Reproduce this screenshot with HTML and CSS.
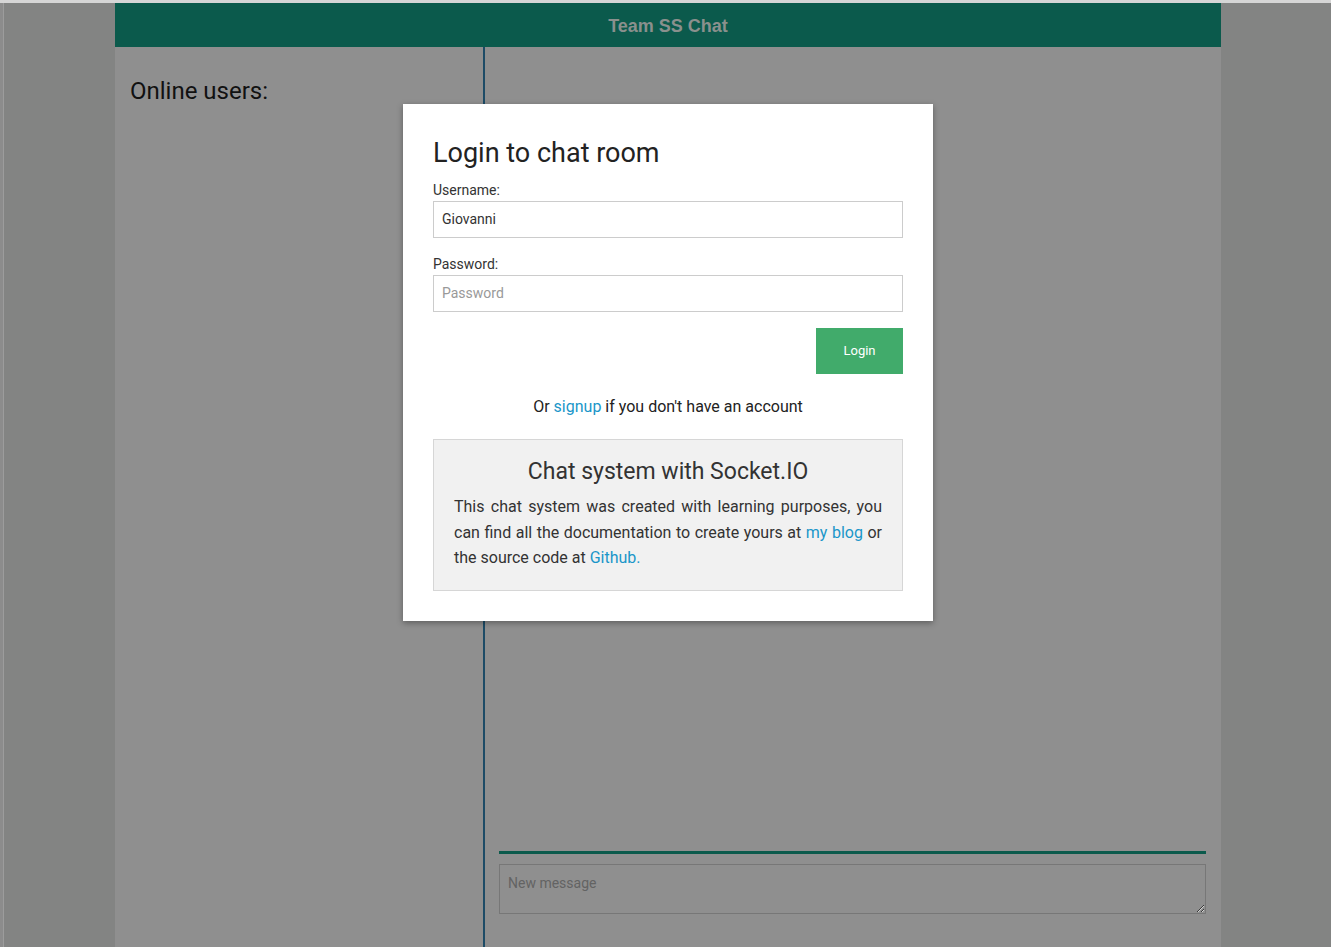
FILE: index.html
```html
<!DOCTYPE html>
<html>
<head>
<meta charset="utf-8">
<title>Team SS Chat</title>
<link rel="stylesheet" href="styles.css">
</head>
<body>
<div class="topline"></div>
<div class="page">
  <div class="edge"></div>
  <div class="app">
    <header class="header">Team SS Chat</header>
    <div class="main">
      <aside class="users">
        <h3 class="users-title">Online users:</h3>
      </aside>
      <section class="chat">
        <div class="messages"></div>
        <div class="divider"></div>
        <textarea class="new-msg" placeholder="New message"></textarea>
      </section>
    </div>
    <div class="overlay">
      <div class="modal">
        <h2 class="modal-title">Login to chat room</h2>
        <div class="field">
          <label class="label">Username:</label>
          <input class="input" type="text" value="Giovanni">
        </div>
        <div class="field">
          <label class="label">Password:</label>
          <input class="input" type="password" placeholder="Password">
        </div>
        <div class="actions">
          <button class="btn">Login</button>
        </div>
        <p class="signup">Or <a href="#">signup</a> if you don't have an account</p>
        <div class="info">
          <h3 class="info-title">Chat system with Socket.IO</h3>
          <p class="info-text">This chat system was created with learning purposes, you can find all the documentation to create yours at <a href="#">my blog</a> or the source code at <a href="#">Github.</a></p>
        </div>
      </div>
    </div>
  </div>
</div>
</body>
</html>
```
FILE: styles.css
```css
* { box-sizing: border-box; }
html, body { margin: 0; padding: 0; }
body {
  background: #838483;
  font-family: Roboto, "Liberation Sans", sans-serif;
  height: 947px;
  overflow: hidden;
}
.topline { height: 3px; background: #d6d6d6; }
.page { display: flex; height: 944px; }
.edge {
  width: 4px;
  background: #8c8c8c;
  border-right: 1px solid #9c9c9c;
}
.app {
  position: relative;
  width: 1106px;
  margin-left: 111px;
  background: #8f8f8f;
  display: flex;
  flex-direction: column;
}
.header {
  height: 44px;
  background: #0b5a4c;
  color: #8a908d;
  font-family: "Liberation Sans", Arial, sans-serif;
  font-weight: bold;
  font-size: 18px;
  line-height: 46px;
  text-align: center;
}
.main { flex: 1; display: flex; }
.users {
  width: 370px;
  border-right: 2px solid #1d4b66;
  padding: 15px;
}
.users-title {
  margin: 15px 0 0;
  font-weight: normal;
  font-size: 24px;
  line-height: 28px;
  color: #111;
}
.chat {
  flex: 1;
  display: flex;
  flex-direction: column;
  padding: 0 15px 33px 14px;
}
.messages { flex: 1; }
.divider { height: 3px; background: #0b5a4c; margin-bottom: 10px; }
.new-msg {
  height: 50px;
  background: transparent;
  border: 1px solid #777;
  font-family: Roboto, "Liberation Sans", sans-serif;
  font-size: 14px;
  padding: 10px 8px 8px;
  resize: vertical;
}
.new-msg::placeholder { color: #636363; }
.overlay {
  position: absolute;
  left: 0; top: 0; right: 0; bottom: 0;
  display: flex;
  justify-content: center;
  align-items: flex-start;
  padding-top: 101px;
}
.modal {
  width: 530px;
  background: #fff;
  padding: 31px 30px 30px;
  box-shadow: 0 2px 6px rgba(0,0,0,0.35);
}
.modal-title {
  margin: 0 0 9px;
  font-weight: normal;
  font-size: 27px;
  line-height: 36px;
  color: #222;
}
.field { display: flex; flex-direction: column; margin-bottom: 16px; }
.label {
  font-size: 14px;
  line-height: 20px;
  color: #333;
  margin-bottom: 1px;
}
.input {
  height: 37px;
  border: 1px solid #ccc;
  padding: 0 8px 1px;
  font-family: Roboto, "Liberation Sans", sans-serif;
  font-size: 14px;
  color: #333;
  outline: none;
}
.input::placeholder { color: #999; }
.actions { display: flex; justify-content: flex-end; }
.btn {
  width: 87px;
  height: 46px;
  padding-bottom: 2px;
  background: #41ab6b;
  border: none;
  color: #fff;
  font-family: Roboto, "Liberation Sans", sans-serif;
  font-size: 13px;
}
.signup {
  margin: 22px 0 21px;
  text-align: center;
  font-size: 16px;
  line-height: 22px;
  color: #222;
}
a { color: #1a96c9; text-decoration: none; }
.info {
  background: #f1f1f1;
  border: 1px solid #d6d6d6;
  padding: 17px 20px 19px;
}
.info-title {
  margin: 0 0 7px;
  text-align: center;
  font-weight: normal;
  font-size: 23px;
  line-height: 30px;
  color: #333;
}
.info-text {
  margin: 0;
  font-size: 16px;
  line-height: 25.5px;
  text-align: justify;
  color: #333;
}
```
